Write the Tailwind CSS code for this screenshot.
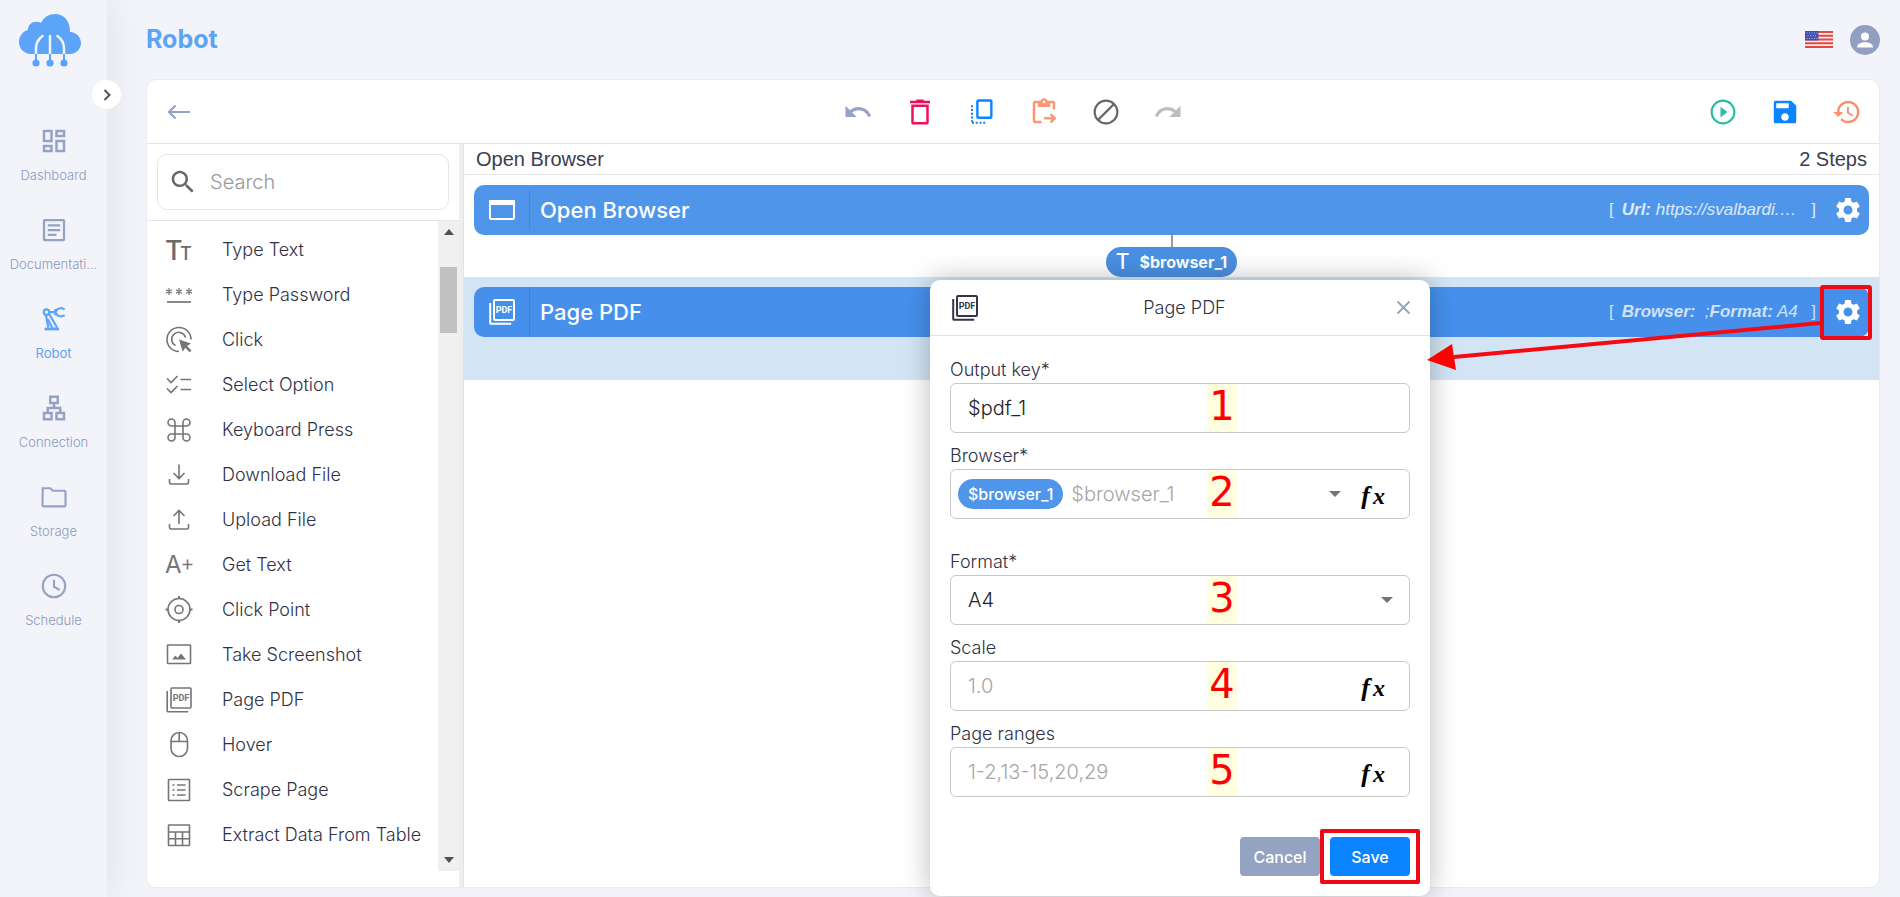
<!DOCTYPE html>
<html lang="en">
<head>
<meta charset="utf-8">
<title>Robot</title>
<script src="https://cdn.jsdelivr.net/npm/@tailwindcss/browser@4"></script>
</head>
<body class="h-screen overflow-hidden bg-[#f3f4f9] font-['Inter',sans-serif] text-[#3a3d52]">
<svg class="hidden" aria-hidden="true">
  <symbol id="gear" viewBox="0 0 24 24"><path fill="currentColor" d="M19.14 12.94c.04-.3.06-.61.06-.94 0-.32-.02-.64-.07-.94l2.03-1.58c.18-.14.23-.41.12-.61l-1.92-3.32c-.12-.22-.37-.29-.59-.22l-2.39.96c-.5-.38-1.03-.7-1.62-.94l-.36-2.54c-.04-.24-.24-.41-.48-.41h-3.84c-.24 0-.43.17-.47.41l-.36 2.54c-.59.24-1.13.57-1.62.94l-2.39-.96c-.22-.08-.47 0-.59.22L2.74 8.87c-.12.21-.08.47.12.61l2.03 1.58c-.05.3-.09.63-.09.94s.02.64.07.94l-2.03 1.58c-.18.14-.23.41-.12.61l1.92 3.32c.12.22.37.29.59.22l2.39-.96c.5.38 1.03.7 1.62.94l.36 2.54c.05.24.24.41.48.41h3.84c.24 0 .44-.17.47-.41l.36-2.54c.59-.24 1.13-.56 1.62-.94l2.39.96c.22.08.47 0 .59-.22l1.92-3.32c.12-.22.07-.47-.12-.61l-2.01-1.58zM12 15.6c-1.98 0-3.6-1.62-3.6-3.6s1.62-3.6 3.6-3.6 3.6 1.62 3.6 3.6-1.62 3.6-3.6 3.6z"/></symbol>
  <symbol id="pdf" viewBox="0 0 30 30"><rect x="7" y="3" width="20" height="20" rx="1" fill="none" stroke="currentColor"/><path d="M3.200 6v19.800a1 1 0 0 0 1 1h20" fill="none" stroke="currentColor"/><text x="17" y="16" text-anchor="middle" font-size="9" font-weight="700" font-family="'Liberation Sans Narrow', Roboto, sans-serif" fill="currentColor" stroke="none">PDF</text></symbol>
</svg>

<div class="flex h-full">
  <nav class="relative z-10 flex w-[107px] shrink-0 flex-col items-center bg-[#f3f4f9] shadow-[4px_0_36px_rgba(0,0,0,0.07)]">
    <svg class="mt-3 mr-2 h-14 w-16" viewBox="0 0 64 56" aria-label="Logo">
      <path fill="#5ba4f9" d="M12 42C5 41 1 36 1 30c0-6 4-11 9-12 0-6 5-9 10-8 1 0 2 0 3 1C26 5 31 2 37 2c9 0 15 7 15 17v1c6 0 11 5 11 11 0 6-5 11-11 11z"/>
      <path fill="none" stroke="#f3f4f9" stroke-width="2.500" stroke-linecap="round" d="M24.500 24c-4 3-6.500 7-6.500 12v6M32 24v18M39.500 24c4 3 6.500 7 6.500 12v6"/>
      <path fill="none" stroke="#5ba4f9" stroke-width="2" d="M18 42v9M32 42v9M46 42v9"/>
      <g fill="#5ba4f9"><circle cx="18" cy="51" r="3.600"/><circle cx="32" cy="51" r="3.600"/><circle cx="46" cy="51" r="3.600"/></g>
    </svg>
    <button class="absolute top-20 -right-3.5 flex size-[29px] items-center justify-center rounded-full bg-white text-[#555]" aria-label="Expand menu">
      <svg class="size-5" viewBox="0 0 20 20" fill="none" stroke="currentColor" stroke-width="2"><path d="M7.500 5l5 5-5 5"/></svg>
    </button>
    <ul class="mt-[58px] w-full text-center text-[13px] font-light text-[#8b98bd]">
      <li class="h-[89px]"><a href="#" class="flex flex-col items-center gap-2.5">
        <svg class="size-[30px] text-[#96a2c4]" viewBox="0 0 24 24" fill="currentColor"><path d="M19 5v2h-4V5h4M9 5v6H5V5h4m10 8v6h-4v-6h4M9 17v2H5v-2h4M21 3h-8v6h8V3zM11 3H3v10h8V3zm10 8h-8v10h8V11zm-10 4H3v6h8v-6z"/></svg>
        <span>Dashboard</span></a></li>
      <li class="h-[89px]"><a href="#" class="flex flex-col items-center gap-2.5">
        <svg class="size-[30px] text-[#96a2c4]" viewBox="0 0 24 24" fill="none" stroke="currentColor" stroke-width="1.800"><rect x="4" y="4" width="16" height="16" rx=".5"/><path d="M7 8.200h10M7 12h10M7 15.800h7"/></svg>
        <span>Documentati...</span></a></li>
      <li class="h-[89px] text-[#5ba4f9]"><a href="#" class="flex flex-col items-center gap-2.5">
        <svg class="size-[30px]" viewBox="0 0 24 24" fill="none" stroke="currentColor" stroke-width="1.700"><circle cx="6" cy="6.500" r="2.200"/><path d="M8.200 6.500H13M13 4v5M13 6.500l2-2.500 3-.8 2.500 1M13 6.500l2 2.700 3 .8 2.500-1M5.500 8.800L7.500 19M8 7.800L14 18v2"/><path stroke-width="2.200" d="M4.500 20H16"/><path d="M7 12l4 8"/></svg>
        <span class="font-normal">Robot</span></a></li>
      <li class="h-[89px]"><a href="#" class="flex flex-col items-center gap-2.5">
        <svg class="size-[30px] text-[#96a2c4]" viewBox="0 0 24 24" fill="currentColor"><path d="M13 22h8v-7h-3v-4h-5V9h3V2H8v7h3v2H6v4H3v7h8v-7H8v-2h8v2h-3v7zM10 7V4h4v3h-4zM9 17v3H5v-3h4zm10 0v3h-4v-3h4z"/></svg>
        <span>Connection</span></a></li>
      <li class="h-[89px]"><a href="#" class="flex flex-col items-center gap-2.5">
        <svg class="size-[30px] text-[#96a2c4]" viewBox="0 0 24 24" fill="none" stroke="currentColor" stroke-width="1.700"><path d="M3 5h6l2 2h9.200a1 1 0 0 1 1 1v10.500a1 1 0 0 1-1 1H3.800a1 1 0 0 1-1-1z"/></svg>
        <span>Storage</span></a></li>
      <li class="h-[89px]"><a href="#" class="flex flex-col items-center gap-2.5">
        <svg class="size-[30px] text-[#96a2c4]" viewBox="0 0 24 24" fill="none" stroke="currentColor" stroke-width="1.700"><circle cx="12" cy="12" r="9"/><path d="M12 7v5.500l4.500 2.700"/></svg>
        <span>Schedule</span></a></li>
    </ul>
  </nav>

  <main class="flex min-w-0 flex-1 flex-col pr-5 pb-[9px] pl-[39px]">
    <header class="flex h-[79px] shrink-0 items-center">
      <h1 class="flex-1 text-[25px] font-bold text-[#5ba4f9]">Robot</h1>
      <svg class="mr-[17px] h-[17px] w-7" viewBox="0 0 28 17" role="img" aria-label="English"><rect width="28" height="17" fill="#f3eff2"/><path stroke="#e8473f" stroke-width="1.900" d="M0 1h28M0 4.700h28M0 8.500h28M0 12.200h28M0 16h28"/><rect width="13.500" height="9.500" fill="#4450b0"/><path stroke="#b9bfe6" stroke-width="1" stroke-dasharray="1 1.500" d="M1.500 2h11M2.500 4.700h10M1.500 7.400h11"/></svg>
      <button class="size-[30px]" aria-label="Account"><svg class="size-full" viewBox="0 0 30 30"><circle cx="15" cy="15" r="15" fill="#929fc2"/><circle cx="15" cy="11.500" r="4" fill="#fff"/><path fill="#fff" d="M7 22.500c0-3.800 4-5.300 8-5.300s8 1.500 8 5.300z"/></svg></button>
    </header>

    <section class="flex min-h-0 flex-1 flex-col overflow-hidden rounded-[10px] border border-[#e8eaef] bg-white">
      <div class="grid h-16 shrink-0 grid-cols-3 items-center border-b border-[#e4e5e9] px-[17px]">
        <button class="size-[30px] text-[#96a2c4]" aria-label="Back"><svg class="size-full" viewBox="0 0 30 30" fill="none" stroke="currentColor" stroke-width="2.200"><path d="M26 15H5M11.500 8.500L5 15l6.500 6.500"/></svg></button>
        <div class="flex justify-center gap-8">
          <button class="size-[30px] text-[#96a2c8]" aria-label="Undo"><svg class="size-full" viewBox="0 0 24 24" fill="currentColor"><path d="M12.500 8c-2.650 0-5.050.99-6.900 2.600L2 7v9h9l-3.620-3.620c1.390-1.160 3.160-1.880 5.120-1.880 3.540 0 6.550 2.310 7.600 5.500l2.370-.78C21.080 11.030 17.150 8 12.500 8z"/></svg></button>
          <button class="size-[30px] text-[#ec1259]" aria-label="Delete"><svg class="size-full" viewBox="0 0 24 24" fill="currentColor"><path d="M5 20.300c0 .9.600 1.700 1.600 1.700h10.800c1 0 1.600-.8 1.600-1.700V6H5zM7 8h10v12H7zm8.500-5l-1-1h-5l-1 1H4v2h16V3z"/></svg></button>
          <button class="size-[30px] text-[#0a84ff]" aria-label="Duplicate"><svg class="size-full" viewBox="0 0 24 24" fill="none" stroke="currentColor"><rect x="8.300" y="2.800" width="11.200" height="13.800" rx=".8" stroke-width="1.900"/><path stroke-width="1.600" stroke-dasharray="1.600 1.400" d="M4 6.500v13.500M4 20.500h11.500"/></svg></button>
          <button class="size-[30px] text-[#fc9774]" aria-label="Paste"><svg class="size-full" viewBox="0 0 24 24" fill="currentColor"><path d="M5 5h2v3h10V5h2v5h2V5c0-1.100-.9-2-2-2h-4.180C14.400 1.840 13.300 1 12 1s-2.400.84-2.820 2H5c-1.100 0-2 .9-2 2v14c0 1.100.9 2 2 2h5v-2H5V5zm7-2c.55 0 1 .45 1 1s-.45 1-1 1-1-.45-1-1 .45-1 1-1zM18.010 13l-1.420 1.410 1.580 1.580H12v2h6.170l-1.580 1.590L18.010 21 22 17z"/></svg></button>
          <button class="size-[30px] text-[#666]" aria-label="Disable"><svg class="size-full" viewBox="0 0 24 24" fill="none" stroke="currentColor" stroke-width="1.700"><circle cx="12" cy="12" r="9.100"/><path d="M5.700 18.300L18.300 5.700"/></svg></button>
          <button class="size-[30px] text-[#bdbdbd]" aria-label="Redo"><svg class="size-full" viewBox="0 0 24 24" fill="currentColor"><path d="M18.400 10.600C16.550 8.990 14.150 8 11.500 8c-4.650 0-8.580 3.030-9.960 7.220L3.900 16c1.050-3.190 4.050-5.500 7.600-5.500 1.950 0 3.730.72 5.120 1.880L13 16h9V7z"/></svg></button>
        </div>
        <div class="flex justify-end gap-8">
          <button class="size-[30px] text-[#27bda6]" aria-label="Run"><svg class="size-full" viewBox="0 0 24 24"><circle cx="12" cy="12" r="9.100" fill="none" stroke="currentColor" stroke-width="1.700"/><path fill="currentColor" d="M10 16.300l5.500-4.300L10 7.700z"/></svg></button>
          <button class="size-[30px] text-[#0a84ff]" aria-label="Save robot"><svg class="size-full" viewBox="0 0 24 24" fill="currentColor"><path d="M17 3H4.500A1.500 1.500 0 0 0 3 4.500v15A1.500 1.500 0 0 0 4.500 21h15a1.500 1.500 0 0 0 1.500-1.500V7zm-5 16c-1.660 0-3-1.340-3-3s1.340-3 3-3 3 1.340 3 3-1.340 3-3 3zm3-10H5V5h10z"/></svg></button>
          <button class="size-[30px] text-[#fc8f70]" aria-label="History"><svg class="size-full" viewBox="0 0 24 24" fill="currentColor"><path d="M13 3c-4.970 0-9 4.030-9 9H1l3.890 3.890.07.14L9 12H6c0-3.870 3.130-7 7-7s7 3.130 7 7-3.130 7-7 7c-1.930 0-3.680-.79-4.940-2.060l-1.420 1.420C8.270 19.990 10.510 21 13 21c4.970 0 9-4.030 9-9s-4.030-9-9-9zm-1 5v5l4.280 2.540.72-1.210-3.500-2.080V8H12z"/></svg></button>
        </div>
      </div>

      <div class="flex min-h-0 flex-1">
        <aside class="flex w-[312px] shrink-0 flex-col">
          <div class="border-b border-[#e4e5e9] px-2.5 py-2.5">
            <label class="flex h-14 items-center gap-3 rounded-[10px] border border-[#e2e4ea] pl-2.5 text-[#666]">
              <svg class="size-[30px] shrink-0" viewBox="0 0 24 24" fill="currentColor"><path d="M15.500 14h-.79l-.28-.27C15.410 12.590 16 11.110 16 9.500 16 5.910 13.090 3 9.500 3S3 5.910 3 9.500 5.910 16 9.500 16c1.610 0 3.090-.59 4.230-1.570l.27.28v.79l5 4.990L20.490 19zm-6 0C7.010 14 5 11.990 5 9.500S7.010 5 9.500 5 14 7.010 14 9.500 11.990 14 9.500 14z"/></svg>
              <input type="search" placeholder="Search" aria-label="Search" class="w-full min-w-0 text-xl font-light outline-none placeholder:text-[#999]">
            </label>
          </div>
          <div class="mb-4 flex min-h-0 flex-1">
            <ul class="min-w-0 flex-1 overflow-hidden pt-1.5 pl-[17px] text-lg font-light text-[#2f3144]">
              <li class="flex h-[45px] items-center gap-7"><svg class="size-[30px] shrink-0 overflow-visible text-[#6b6b6b]" viewBox="0 0 30 30" fill="currentColor" font-family="Inter, sans-serif" font-weight="500"><text x="1" y="25" font-size="27">T</text><text x="16" y="25" font-size="18">T</text></svg>Type Text</li>
              <li class="flex h-[45px] items-center gap-7"><svg class="size-[30px] shrink-0 text-[#757575]" viewBox="0 0 30 30" fill="none" stroke="currentColor"><path stroke-width="1.200" d="M5 8v7M2 9.700l6 3.500M8 9.700l-6 3.500M15 8v7M12 9.700l6 3.500M18 9.700l-6 3.500M25 8v7M22 9.700l6 3.500M28 9.700l-6 3.500"/><path stroke-width="1.700" d="M3 22h24"/></svg>Type Password</li>
              <li class="flex h-[45px] items-center gap-7"><svg class="size-[30px] shrink-0 text-[#757575]" viewBox="0 0 30 30" fill="none" stroke="currentColor" stroke-width="1.600"><path d="M15 26.500A12 12 0 1 1 27 14.500M11.500 20.500A7 7 0 1 1 21.500 12.500"/><path fill="currentColor" stroke="none" d="M15 14.500l12 4-4 2.500 4.500 4.500-1.800 1.800-4.500-4.500-2.500 4z"/></svg>Click</li>
              <li class="flex h-[45px] items-center gap-7"><svg class="size-[30px] shrink-0 text-[#757575]" viewBox="0 0 30 30" fill="none" stroke="currentColor" stroke-width="1.600"><path d="M3 8.500l4 4 6.500-6.500M3 18.500l4 4 6.500-6.500M16.500 9.500H27M16.500 19.500H27"/></svg>Select Option</li>
              <li class="flex h-[45px] items-center gap-7"><svg class="size-[30px] shrink-0 text-[#757575]" viewBox="0 0 30 30" fill="none" stroke="currentColor" stroke-width="1.600"><path d="M11 11h8v8h-8zM11 11V7.500A3.500 3.500 0 1 0 7.500 11zM19 11h3.500A3.500 3.500 0 1 0 19 7.500zM19 19v3.500a3.500 3.500 0 1 0 3.500-3.500zM11 19H7.500a3.500 3.500 0 1 0 3.500 3.500z"/></svg>Keyboard Press</li>
              <li class="flex h-[45px] items-center gap-7"><svg class="size-[30px] shrink-0 text-[#757575]" viewBox="0 0 30 30" fill="none" stroke="currentColor" stroke-width="1.600"><path d="M15 4.500V18M9.500 13l5.500 5.500 5.500-5.500M5.500 19v3.500a1.500 1.500 0 0 0 1.500 1.500h16a1.500 1.500 0 0 0 1.500-1.500V19"/></svg>Download File</li>
              <li class="flex h-[45px] items-center gap-7"><svg class="size-[30px] shrink-0 text-[#757575]" viewBox="0 0 30 30" fill="none" stroke="currentColor" stroke-width="1.600"><path d="M15 19V6M9.500 11L15 5.500l5.500 5.500M5.500 19v3.500a1.500 1.500 0 0 0 1.500 1.500h16a1.500 1.500 0 0 0 1.500-1.500V19"/></svg>Upload File</li>
              <li class="flex h-[45px] items-center gap-7"><svg class="size-[30px] shrink-0 overflow-visible text-[#757575]" viewBox="0 0 30 30"><text x="1" y="23" font-size="24" font-weight="400" font-family="Inter, sans-serif" fill="currentColor">A</text><path stroke="currentColor" stroke-width="1.600" d="M18.500 14.500h10M23.500 9.500v10"/></svg>Get Text</li>
              <li class="flex h-[45px] items-center gap-7"><svg class="size-[30px] shrink-0 text-[#757575]" viewBox="0 0 30 30" fill="none" stroke="currentColor" stroke-width="1.600"><circle cx="15" cy="14.500" r="11"/><circle cx="15" cy="14.500" r="4"/><path stroke-width="2" d="M15 1v3M15 25v3M1.500 14.500h3M25.500 14.500h3"/></svg>Click Point</li>
              <li class="flex h-[45px] items-center gap-7"><svg class="size-[30px] shrink-0 text-[#757575]" viewBox="0 0 30 30" fill="none" stroke="currentColor" stroke-width="1.600"><rect x="3.500" y="5" width="23" height="18.500" rx=".5"/><path fill="currentColor" stroke="none" d="M8 19.500l3.500-4 2 2.500 3.500-4.500 5 6z"/></svg>Take Screenshot</li>
              <li class="flex h-[45px] items-center gap-7"><svg class="size-[30px] shrink-0 stroke-[1.6] text-[#757575]"><use href="#pdf"/></svg>Page PDF</li>
              <li class="flex h-[45px] items-center gap-7"><svg class="size-[30px] shrink-0 text-[#757575]" viewBox="0 0 30 30" fill="none" stroke="currentColor" stroke-width="1.600"><rect x="7" y="2.500" width="16.500" height="24" rx="8.250"/><path d="M7 11.500h16.500M15.200 2.500v9"/></svg>Hover</li>
              <li class="flex h-[45px] items-center gap-7"><svg class="size-[30px] shrink-0 text-[#757575]" viewBox="0 0 30 30" fill="none" stroke="currentColor" stroke-width="1.600"><rect x="4.500" y="4.500" width="21" height="21" rx=".5"/><path d="M8.500 10h2M13 10h8.500M8.500 15h2M13 15h8.500M8.500 20h2M13 20h8.500"/></svg>Scrape Page</li>
              <li class="flex h-[45px] items-center gap-7 whitespace-nowrap"><svg class="size-[30px] shrink-0 text-[#757575]" viewBox="0 0 30 30" fill="none" stroke="currentColor" stroke-width="1.600"><rect x="4.500" y="5" width="21" height="20.500" rx=".5"/><path d="M4.500 12h21M4.500 18.700h21M11.500 12v13.500M18.500 12v13.500"/></svg>Extract Data From Table</li>
            </ul>
            <div class="flex w-[21px] flex-col items-center bg-[#f0f0f0] pt-2 pb-2" aria-hidden="true">
              <svg class="h-[6px] w-[10px]" viewBox="0 0 10 6"><path fill="#505050" d="M0 6l5-6 5 6z"/></svg>
              <div class="mt-8 h-[66px] w-[17px] bg-[#c1c1c1]"></div>
              <svg class="mt-auto h-[6px] w-[10px]" viewBox="0 0 10 6"><path fill="#505050" d="M0 0l5 6 5-6z"/></svg>
            </div>
          </div>
        </aside>
        <div class="w-[5px] shrink-0 border-r border-[#e2e2e2] bg-[#eeeeee]"></div>

        <div class="min-w-0 flex-1">
          <div class="flex h-[31px] items-center justify-between border-b border-[#e8e8ea] pr-3 pl-3 font-['Liberation_Sans',Arial,sans-serif] text-xl">
            <span>Open Browser</span><span>2 Steps</span>
          </div>
          <div class="flex h-[102px] flex-col px-2.5 pt-2.5">
            <div class="flex h-[50px] shrink-0 items-center rounded-[10px] bg-[#4f96ea] pr-1.5 text-white">
              <div class="flex h-10 w-14 items-center justify-center border-r border-[#4387db]">
                <svg class="size-[30px]" viewBox="0 0 30 30"><rect x="3" y="6" width="24" height="18" rx="1" fill="none" stroke="currentColor" stroke-width="2"/><path fill="currentColor" d="M2 5h26v5H2z"/></svg>
              </div>
              <span class="flex-1 pl-2.5 text-[22px] leading-7 font-medium">Open Browser</span>
              <span class="mr-[17px] flex w-[207px] font-['Liberation_Sans',Arial,sans-serif] text-[17px] text-white/80 italic"><span class="not-italic">[</span><span class="flex-1 pl-2"><b>Url:</b> https://svalbardi.…</span><span class="not-italic">]</span></span>
              <button class="size-[30px]" aria-label="Open Browser settings"><svg class="size-full"><use href="#gear"/></svg></button>
            </div>
            <div class="mx-auto h-3 w-0.5 bg-[#9a9a9a]"></div>
            <div class="mx-auto flex h-[30px] shrink-0 items-center gap-2.5 rounded-full bg-[#4a90e2] px-2.5 font-bold text-white"><span class="text-[21px] font-medium">T</span><span class="text-base">$browser_1</span></div>
          </div>
          <div class="h-[103px] bg-[#d3e5f4] px-2.5 pt-2.5">
            <div class="flex h-[50px] items-center rounded-[10px] bg-[#4690ec] pr-1.5 text-white">
              <div class="flex h-full w-14 items-center justify-center border-r border-[#3d80da]">
                <svg class="size-[30px] stroke-2"><use href="#pdf"/></svg>
              </div>
              <span class="flex-1 pl-2.5 text-[22px] leading-7 font-medium">Page PDF</span>
              <span class="mr-[17px] flex w-[207px] font-['Liberation_Sans',Arial,sans-serif] text-[17px] text-white/75 italic"><span class="not-italic">[</span><span class="flex-1 pl-2"><b>Browser:</b>&nbsp; ;<b>Format:</b> A4</span><span class="not-italic">]</span></span>
              <button class="size-[30px]" aria-label="Page PDF settings"><svg class="size-full"><use href="#gear"/></svg></button>
            </div>
          </div>
        </div>
      </div>
    </section>
  </main>
</div>

<form class="absolute top-[280px] left-[930px] z-20 w-[500px] rounded-[10px] bg-white shadow-[0_0_28px_rgba(0,0,0,0.28)]">
  <header class="flex h-14 items-center border-b border-[#dfe0e4] pr-3 pl-5">
    <svg class="size-[30px] stroke-2 text-[#33364a]"><use href="#pdf"/></svg>
    <h2 class="flex-1 text-center text-lg font-light text-[#2f3144]">Page PDF</h2>
    <button type="button" class="flex h-[15px] w-[29px] justify-center text-[#92a4b8]" aria-label="Close"><svg class="size-[15px]" viewBox="0 0 15 15" stroke="currentColor" stroke-width="1.800"><path d="M1.500 1.500l12 12M13.500 1.500l-12 12"/></svg></button>
  </header>
  <div class="flex flex-col gap-2.5 px-5 pt-[21px]">
    <div>
      <label for="key" class="block text-lg leading-[26px] font-light text-[#2f3144]">Output key*</label>
      <div class="relative h-[50px]">
        <input id="key" value="$pdf_1" class="size-full rounded-md border border-[#c8c8c8] px-[17px] text-xl font-light text-[#222] outline-none">
        <span class="absolute inset-y-px left-[257px] w-[30px] bg-[#ffffe0] text-center font-['DejaVu_Sans',sans-serif] text-[40px] leading-[44px] text-[#f00]">1</span>
      </div>
    </div>
    <div class="mb-5">
      <label for="browser" class="block text-lg leading-[26px] font-light text-[#2f3144]">Browser*</label>
      <div class="relative flex h-[50px] items-center rounded-md border border-[#c8c8c8] pr-6 pl-[7px]">
        <span class="flex h-[30px] items-center rounded-full bg-[#4f96ea] px-2.5 text-base font-medium text-white">$browser_1</span>
        <input id="browser" placeholder="$browser_1" class="ml-2 min-w-0 flex-1 text-xl font-light outline-none placeholder:text-[#a6a6a6]">
        <button type="button" class="mr-[18px] px-0.5" aria-label="Choose browser"><svg class="h-[6px] w-3" viewBox="0 0 12 6"><path fill="#757575" d="M0 0h12L6 6z"/></svg></button>
        <button type="button" class="flex items-baseline gap-[3px] font-['Liberation_Serif',serif] text-2xl leading-none font-bold text-black italic" aria-label="Formula"><span class="text-[26px]">f</span><span class="pt-1">x</span></button>
        <span class="absolute inset-y-0 left-[256px] w-[30px] bg-[#ffffe0] text-center font-['DejaVu_Sans',sans-serif] text-[40px] leading-[44px] text-[#f00]">2</span>
      </div>
    </div>
    <div>
      <label for="format" class="block text-lg leading-[26px] font-light text-[#2f3144]">Format*</label>
      <div class="relative h-[50px]">
        <select id="format" class="size-full appearance-none rounded-md border border-[#c8c8c8] px-[17px] text-xl font-light text-[#222] outline-none"><option>A4</option></select>
        <svg class="pointer-events-none absolute top-[22px] right-[17px] h-[6px] w-3" viewBox="0 0 12 6"><path fill="#757575" d="M0 0h12L6 6z"/></svg>
        <span class="absolute inset-y-px left-[257px] w-[30px] bg-[#ffffe0] text-center font-['DejaVu_Sans',sans-serif] text-[40px] leading-[44px] text-[#f00]">3</span>
      </div>
    </div>
    <div>
      <label for="scale" class="block text-lg leading-[26px] font-light text-[#2f3144]">Scale</label>
      <div class="relative flex h-[50px] items-center rounded-md border border-[#c8c8c8] pr-6 pl-[17px]">
        <input id="scale" placeholder="1.0" class="min-w-0 flex-1 text-xl font-light outline-none placeholder:text-[#a6a6a6]">
        <button type="button" class="flex items-baseline gap-[3px] font-['Liberation_Serif',serif] text-2xl leading-none font-bold text-black italic" aria-label="Formula"><span class="text-[26px]">f</span><span class="pt-1">x</span></button>
        <span class="absolute inset-y-0 left-[256px] w-[30px] bg-[#ffffe0] text-center font-['DejaVu_Sans',sans-serif] text-[40px] leading-[44px] text-[#f00]">4</span>
      </div>
    </div>
    <div>
      <label for="ranges" class="block text-lg leading-[26px] font-light text-[#2f3144]">Page ranges</label>
      <div class="relative flex h-[50px] items-center rounded-md border border-[#c8c8c8] pr-6 pl-[17px]">
        <input id="ranges" placeholder="1-2,13-15,20,29" class="min-w-0 flex-1 text-xl font-light outline-none placeholder:text-[#a6a6a6]">
        <button type="button" class="flex items-baseline gap-[3px] font-['Liberation_Serif',serif] text-2xl leading-none font-bold text-black italic" aria-label="Formula"><span class="text-[26px]">f</span><span class="pt-1">x</span></button>
        <span class="absolute inset-y-0 left-[256px] w-[30px] bg-[#ffffe0] text-center font-['DejaVu_Sans',sans-serif] text-[40px] leading-[44px] text-[#f00]">5</span>
      </div>
    </div>
  </div>
  <footer class="flex justify-end gap-2.5 px-5 pt-10 pb-5 text-base font-medium text-white">
    <button type="button" class="h-[39px] w-20 rounded bg-[#94a3c2]">Cancel</button>
    <div class="relative">
      <button type="submit" class="h-[39px] w-20 rounded bg-[#0a84ff]">Save</button>
      <span class="pointer-events-none absolute -inset-x-2.5 -inset-y-2 rounded-xs border-4 border-[#ee0a14]"></span>
    </div>
  </footer>
</form>

<svg class="pointer-events-none absolute top-[280px] left-[1420px] z-30 h-[100px] w-[460px]" viewBox="0 0 460 100" aria-hidden="true">
  <rect x="402" y="7" width="48" height="51" rx="1" fill="none" stroke="#ee0a14" stroke-width="4"/>
  <path d="M400 43L34 77" stroke="#f40a12" stroke-width="4"/>
  <path d="M7 80L32 64l4 26z" fill="#f00"/>
</svg>
</body>
</html>
